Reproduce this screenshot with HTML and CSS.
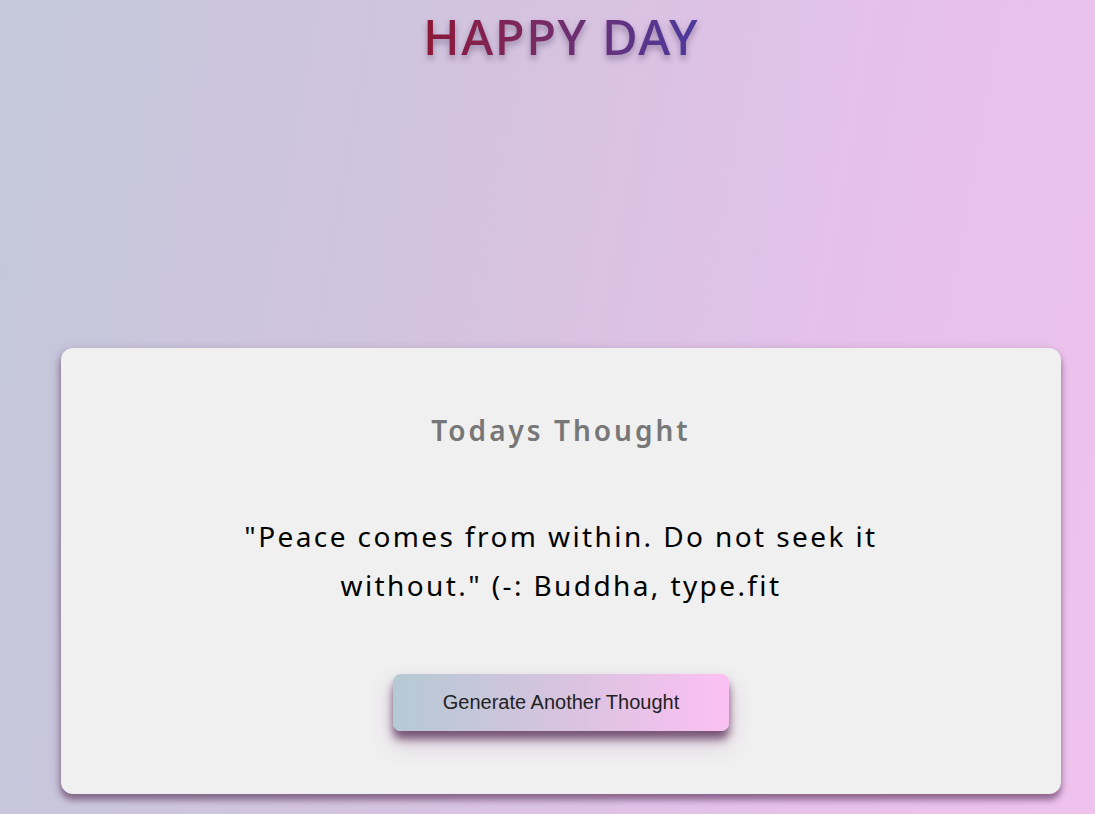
FILE: index.html
```html
<!DOCTYPE html>
<html lang="en">
<head>
<meta charset="utf-8">
<title>Happy Day</title>
<link rel="stylesheet" href="styles.css">
</head>
<body>
  <div class="page">
    <h1 class="title">HAPPY DAY</h1>
    <div class="card">
      <h2 class="card-heading">Todays Thought</h2>
      <p class="quote">"Peace comes from within. Do not seek it without." (-: Buddha, type.fit</p>
      <button class="btn" type="button">Generate Another Thought</button>
    </div>
  </div>
</body>
</html>
```

FILE: styles.css
```css
html, body {
  margin: 0;
  padding: 0;
  height: 100%;
}
body {
  background: linear-gradient(100deg, #c3c8da 0%, #d3c3df 40%, #e6c1ea 75%, #eec2ec 100%);
  overflow: hidden;
}
.page {
  padding-left: 27px;
  display: flex;
  flex-direction: column;
  align-items: center;
}
.title {
  margin: 8px 0 0;
  font-family: "Noto Sans", sans-serif;
  font-weight: 500;
  font-size: 49px;
  line-height: 56px;
  letter-spacing: 1.5px;
  background: linear-gradient(90deg, #8d1736 0%, #7a2a62 40%, #4a3a9e 100%);
  -webkit-background-clip: text;
  background-clip: text;
  color: transparent;
  filter: drop-shadow(0 4px 3px rgba(80, 60, 100, 0.45));
}
.card {
  margin-top: 284px;
  width: 1000px;
  height: 446px;
  box-sizing: border-box;
  background: #f0f0f0;
  border-radius: 12px;
  box-shadow: 0 6px 6px rgba(90, 50, 90, 0.55), -2px 2px 8px rgba(90, 50, 90, 0.25);
  display: flex;
  flex-direction: column;
  align-items: center;
  padding-top: 62px;
}
.card-heading {
  margin: 0;
  font-family: "Noto Sans", sans-serif;
  font-weight: 600;
  font-size: 28px;
  line-height: 40px;
  letter-spacing: 3px;
  color: #777777;
}
.quote {
  margin: 62px 0 0;
  width: 720px;
  text-align: center;
  font-family: "Noto Sans", sans-serif;
  font-weight: 400;
  font-size: 28px;
  line-height: 49px;
  letter-spacing: 2.4px;
  color: #000;
}
.btn {
  margin-top: 64px;
  width: 336px;
  height: 57px;
  border: none;
  border-radius: 8px;
  background: linear-gradient(90deg, #b5c9d4 0%, #d7c3df 50%, #fcc0f3 100%);
  font-family: "Liberation Sans", Arial, sans-serif;
  font-size: 20px;
  color: #222;
  box-shadow: 0 8px 8px rgba(85, 45, 85, 0.75), 0 12px 22px rgba(150, 90, 150, 0.3);
  cursor: pointer;
}
```
